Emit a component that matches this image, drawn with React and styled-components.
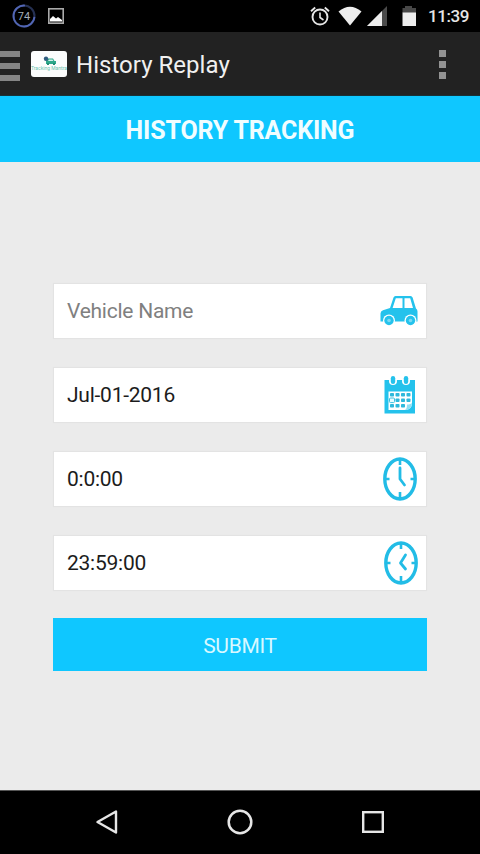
import React from 'react';
import styled, { createGlobalStyle } from 'styled-components';

const GlobalStyle = createGlobalStyle`
  * {
    box-sizing: border-box;
  }
  body {
    margin: 0;
    background-color: #000;
    font-family: Roboto, "Liberation Sans", sans-serif;
  }
  svg {
    display: block;
    flex-shrink: 0;
  }
`;

const Screen = styled.div`
  display: flex;
  flex-direction: column;
  width: 480px;
  height: 854px;
  overflow: hidden;
  background-color: #ebebeb;
`;
const StatusBar = styled.div`
  display: flex;
  align-items: center;
  justify-content: space-between;
  height: 32px;
  padding: 0 11px 0 12px;
  background-color: #000;
`;
const StatusGroup = styled.div`
  display: flex;
  align-items: center;
  gap: ${({ $gap }) => $gap}px;
`;
const Time = styled.span`
  width: 41px;
  margin-left: 4px;
  color: #e6e6e6;
  font-size: 17px;
  font-weight: 500;
  line-height: 32px;
  letter-spacing: -0.4px;
  white-space: nowrap;
`;
const ActionBar = styled.div`
  display: flex;
  align-items: center;
  height: 64px;
  padding-right: 34px;
  background-color: #222;
  border-bottom: 1px solid #173238;
`;
const MenuLines = styled.div`
  display: flex;
  flex-direction: column;
  gap: 6px;
  width: 20px;
  margin-top: 4px;
`;
const Line = styled.span`
  height: 6px;
  background-color: #858585;
`;
const Logo = styled.div`
  display: flex;
  flex-direction: column;
  align-items: center;
  width: 36px;
  height: 26px;
  margin-left: 11px;
  padding-top: 5px;
  border-radius: 3px;
  background-color: #fcfdfd;
  overflow: hidden;
`;
const LogoText = styled.span`
  color: #6cc3ae;
  font-size: 5px;
  line-height: 7px;
  white-space: nowrap;
`;
const Title = styled.h1`
  flex: 1;
  margin: 3px 0 0 9px;
  color: #f0f0f0;
  font-size: 24px;
  font-weight: 400;
  letter-spacing: 0.03px;
`;
const Overflow = styled.div`
  display: flex;
  flex-direction: column;
  gap: 4px;
  margin-top: 1px;
`;
const Dot = styled.span`
  width: 7px;
  height: 7px;
  background-color: #929292;
`;
const Banner = styled.div`
  display: flex;
  align-items: center;
  justify-content: center;
  height: 66px;
  padding-top: 3px;
  background-color: #0fc7ff;
  color: #f0fdff;
  font-size: 25px;
  font-weight: 700;
  letter-spacing: -0.17px;
`;
const Form = styled.div`
  display: flex;
  flex: 1;
  flex-direction: column;
  gap: 30px;
  padding: 122px 54px 0;
`;
const Field = styled.div`
  display: flex;
  align-items: center;
  justify-content: space-between;
  height: 54px;
  padding: 0 8px 0 13px;
  background-color: #fff;
  box-shadow: 0 0 1px 1px #e3e3e3;
  color: ${({ $hint }) => ($hint ? '#808080' : '#1c1c1c')};
  font-size: 21px;
  letter-spacing: -0.25px;
`;
const IconSlot = styled.span`
  display: flex;
  justify-content: center;
  width: 38px;
  padding-left: ${({ $shift }) => $shift || 0}px;
`;
const Submit = styled.button`
  height: 53px;
  margin: -2px -1px 0;
  padding: 2px 0 0;
  border: none;
  background-color: #0fc7ff;
  color: #d8f8ff;
  font-family: inherit;
  font-size: 21px;
  letter-spacing: -0.3px;
`;
const NavBar = styled.div`
  display: flex;
  align-items: center;
  justify-content: space-between;
  height: 64px;
  padding: 0 95px 2px;
  border-top: 1px solid #555;
  background-color: #000;
`;

const CarIcon = () => (
  <svg width="38" height="32" viewBox="0 0 38 32">
    <path
      d="M0.500 26.500V18.500q0-2.500 2.500-3.200L10 13l3.500-10.500Q14 1 15.500 1H30.500q1.600 0 2.100 1.600L36 13.500q1.500 1 1.500 3V26.500z"
      fill="#24c2ec"
    />
    <path d="M15.800 3.200H22.500V13H12.600zM24.500 3.200H30.200L33 13H24.500z" fill="#fff" />
    <circle cx="9" cy="25.500" r="6" fill="#fff" />
    <circle cx="30.500" cy="25.500" r="6" fill="#fff" />
    <circle cx="9" cy="25.500" r="4.700" fill="#24c2ec" />
    <circle cx="30.500" cy="25.500" r="4.700" fill="#24c2ec" />
    <circle cx="9" cy="25.500" r="1.800" fill="#79daf3" />
    <circle cx="30.500" cy="25.500" r="1.800" fill="#79daf3" />
  </svg>
);

const CalendarIcon = () => (
  <svg width="32" height="38" viewBox="0 0 32 38">
    <path d="M0.500 4H31V37.500H0.500z" fill="#24c2ec" />
    <path d="M4.500 15.500H28V27q0 7-7 7H4.500z" fill="#fff" />
    <path d="M21 34q2-1 2-5.500 4 0 5-2 0 7.500-7 7.500z" fill="#8fe0f5" />
    {[9, 22].map((x) => (
      <g key={x}>
        <circle cx={x} cy="5" r="4" fill="#fff" />
        <rect x={x - 2.2} y="0" width="4.400" height="8" rx="2.200" fill="#24c2ec" />
      </g>
    ))}
    {[17, 22.5, 28].map((y) =>
      [6, 11.5, 17, 22.5].map((x) => (
        <rect
          key={`${x}-${y}`}
          x={x}
          y={y}
          width={y === 28 && x > 22 ? 0 : 4}
          height="3.600"
          rx="0.800"
          fill="#2eb9dc"
        />
      ))
    )}
    <rect x="5.500" y="22" width="5" height="4.600" rx="1" fill="#e7fbff" stroke="#3cc1e0" />
  </svg>
);

const ClockIcon = ({ hands }) => (
  <svg width="34" height="44" viewBox="0 0 34 44" fill="none" stroke="#22bce6">
    <ellipse cx="17" cy="22" rx="15.200" ry="20" strokeWidth="3.400" />
    <path d="M17 3v5M17 35v6M3 22h3.500M27.500 22H31" strokeWidth="2.600" />
    <path d={hands} strokeWidth="2.800" strokeLinejoin="round" strokeLinecap="round" />
  </svg>
);

const AlarmIcon = () => (
  <svg width="20" height="20" viewBox="0 0 20 20" fill="none" stroke="#e6e6e6">
    <circle cx="10" cy="11" r="7.500" strokeWidth="1.900" />
    <path d="M1 5.200L5.200 1.500M19 5.200L14.800 1.500" strokeWidth="1.900" />
    <path d="M10 6.500V11.500L13.500 14" strokeWidth="1.600" />
  </svg>
);

const App = () => {
  return (
    <Screen>
      <GlobalStyle />
      <StatusBar>
        <StatusGroup $gap={12}>
          <svg width="24" height="24" viewBox="0 0 24 24">
            <circle cx="12" cy="12" r="10.500" fill="none" stroke="#253052" strokeWidth="2" />
            <path
              d="M12 1.500A10.500 10.500 0 1 0 22.500 12"
              transform="rotate(5 12 12)"
              fill="none"
              stroke="#5266b5"
              strokeWidth="1.800"
            />
            <text x="12" y="16" textAnchor="middle" fontSize="11" fill="#a5afba">
              74
            </text>
          </svg>
          <svg width="16" height="16" viewBox="0 0 16 16">
            <rect x="0.800" y="0.800" width="14.400" height="14.400" fill="none" stroke="#aaa" strokeWidth="1.600" />
            <path d="M2 13.500V11L5 8l3 2.500 2-1.500 4 3v1.500z" fill="#fff" />
          </svg>
        </StatusGroup>
        <StatusGroup $gap={5}>
          <AlarmIcon />
          <svg width="27" height="20" viewBox="1 0 27 20">
            <path d="M4.500 5.500Q16-4 27.500 5.500L16 19.500z" fill="#ededed" />
          </svg>
          <svg width="20" height="20" viewBox="0 0 20 20">
            <path d="M20 0V20H0z" fill="#4a4a4a" />
            <path d="M15 5V20H0z" fill="#ededed" />
          </svg>
          <svg width="27" height="20" viewBox="-3 0 27 20">
            <path d="M10 0H17v2h4v5H7.500V2H10z" fill="#484848" />
            <path d="M7.500 6.500H21V20H7.500z" fill="#ededed" />
          </svg>
          <Time>11:39</Time>
        </StatusGroup>
      </StatusBar>
      <ActionBar>
        <MenuLines>
          <Line />
          <Line />
          <Line />
        </MenuLines>
        <Logo>
          <svg width="13" height="9" viewBox="0 0 13 9">
            <path d="M3 5L5 2.500h5L11.500 5H13v3H3z" fill="#2fa98b" />
            <path d="M6 3.500h3.500l.8 1.500H5z" fill="#d5f3eb" />
            <circle cx="3" cy="2.800" r="2.200" fill="#315d80" />
            <path d="M4 7h2v2H4zM10 7h2v2h-2z" fill="#238f78" />
          </svg>
          <LogoText>Tracking Mantra</LogoText>
        </Logo>
        <Title>History Replay</Title>
        <Overflow>
          <Dot />
          <Dot />
          <Dot />
        </Overflow>
      </ActionBar>
      <Banner>HISTORY TRACKING</Banner>
      <Form>
        <Field $hint>
          Vehicle Name
          <IconSlot>
            <CarIcon />
          </IconSlot>
        </Field>
        <Field>
          Jul-01-2016
          <IconSlot $shift={2}>
            <CalendarIcon />
          </IconSlot>
        </Field>
        <Field>
          0:0:00
          <IconSlot $shift={2}>
            <ClockIcon hands="M17 11V22L21.500 28" />
          </IconSlot>
        </Field>
        <Field>
          23:59:00
          <IconSlot $shift={4}>
            <ClockIcon hands="M21.500 14L16.500 22L21.500 28" />
          </IconSlot>
        </Field>
        <Submit>SUBMIT</Submit>
      </Form>
      <NavBar>
        <svg width="24" height="26" viewBox="0 0 24 26">
          <path d="M21 2.500V23.500L2.500 13z" fill="none" stroke="#e6e6e6" strokeWidth="2.400" strokeLinejoin="round" />
        </svg>
        <svg width="26" height="26" viewBox="0 0 26 26">
          <circle cx="13" cy="13" r="11.300" fill="none" stroke="#e6e6e6" strokeWidth="2.500" />
        </svg>
        <svg width="24" height="24" viewBox="0 0 24 24">
          <rect x="2.200" y="2.200" width="19.600" height="19.600" fill="none" stroke="#e6e6e6" strokeWidth="2.400" />
        </svg>
      </NavBar>
    </Screen>
  );
};

export default App;
